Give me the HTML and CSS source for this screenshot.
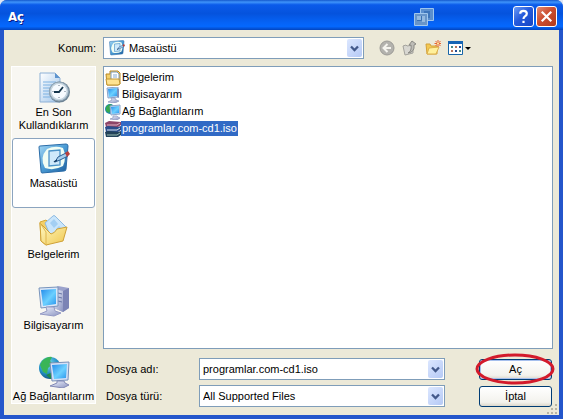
FILE: index.html
```html
<!DOCTYPE html>
<html lang="tr">
<head>
<meta charset="utf-8">
<title>Aç</title>
<link rel="stylesheet" href="styles.css">
</head>
<body>
<svg class="defs" aria-hidden="true">
  <defs>
    <linearGradient id="screen" x1="0" y1="0" x2="1" y2="1"><stop offset="0" stop-color="#248bea"/><stop offset=".55" stop-color="#6cd0ff"/><stop offset="1" stop-color="#2a95ed"/></linearGradient>
    <linearGradient id="metal" x1="0" y1="0" x2="1" y2="1"><stop offset="0" stop-color="#f1f4ff"/><stop offset="1" stop-color="#8a93c0"/></linearGradient>
    <linearGradient id="folder" x1="0" y1="0" x2="1" y2="1"><stop offset="0" stop-color="#fff9c4"/><stop offset="1" stop-color="#f0c850"/></linearGradient>
    <linearGradient id="paper" x1="0" y1="0" x2="1" y2="1"><stop offset="0" stop-color="#fff"/><stop offset="1" stop-color="#9fc4ea"/></linearGradient>
    <linearGradient id="frame" x1="0" y1="0" x2="1" y2="1"><stop offset="0" stop-color="#a5d8f5"/><stop offset=".5" stop-color="#4a9bd4"/><stop offset="1" stop-color="#1b5c9c"/></linearGradient>
    <radialGradient id="globe" cx=".4" cy=".3" r=".75"><stop offset="0" stop-color="#86e0f0"/><stop offset=".6" stop-color="#228fc5"/><stop offset="1" stop-color="#125080"/></radialGradient>
    <symbol id="recent" viewBox="0 0 32 32">
      <path d="M2 1h15l5 5v24H2z" fill="url(#paper)" stroke="#8db0d6"/><path d="M17 1v5h5z" fill="#5e94ce"/>
      <path d="M5 10h13M5 13h10M5 16h7M5 19h6M5 22h6M5 25h7" stroke="#7db1e2"/>
      <circle cx="21.500" cy="20" r="10.500" fill="#6e8394"/><circle cx="21" cy="19.500" r="9.500" fill="#c4d3de" stroke="#8ca3b4"/><circle cx="21" cy="19.500" r="7.500" fill="#f7fbff"/>
      <path d="M21 13v1M21 25v1M14.500 19.500h1M26.500 19.500h1" stroke="#678"/><path d="M25 15l-4 5h-5" fill="none" stroke="#16364c" stroke-width="1.800"/>
    </symbol>
    <symbol id="desktop" viewBox="0 0 32 32">
      <path d="M1 4q0-1 1-1l26-2q2 0 2 2l-2 23q0 2-2 2L4 30q-1 0-1-2z" fill="url(#frame)" stroke="#2a6ca8"/>
      <path d="M9 6q8-4 16-1 4 9 0 18-9 5-18 2-6-10 2-19z" fill="#f0fdf4"/>
      <path d="M11 8l11-1v15l-11 1z" fill="#cfe9fb" stroke="#4b93c8" stroke-width="1.300"/>
      <path d="M17 19l3-5 8-4 2 3-8 4z" fill="#a5cdec" stroke="#2d5f94"/><path d="M16 19l3-2" stroke="#163f66" stroke-width="1.500"/>
      <path d="M27 10l3-2 2 3-3 3z" fill="#b8403d"/>
    </symbol>
    <symbol id="documents" viewBox="0 0 32 32">
      <path d="M2 8l6-2 3 3 4-1v20l-7 3-5-4z" fill="#f3d069" stroke="#d4a838"/>
      <path d="M7 9l8-7q1-1 2 0l11 11-8 12-8-4z" fill="#c9e5fb" stroke="#8ebbe2"/><path d="M12 9l4-4 4 5-4 4zM18 15l3-3 3 3-3 4z" fill="#a3cff3"/>
      <path d="M2 9l11 11q4-1 6-5l10-2-4 14-17 4-5-4z" fill="url(#folder)" stroke="#cfa137"/><path d="M2 9l6 9v13" fill="none" stroke="#dfb64f"/>
    </symbol>
    <symbol id="computer" viewBox="0 0 32 32">
      <path d="M16 4l4-3 11 2v20l-6 4-9-4z" fill="#9ca3cc"/><path d="M16 4l9 2v21l-9-4z" fill="url(#metal)"/><path d="M25 6l6-3v20l-6 4z" fill="#7b83b5"/><path d="M20 8l4 1M20 12l4 1M20 16l4 1" stroke="#6876a7"/>
      <path d="M1 3l19-1v19L3 23z" fill="#dce7f8" stroke="#7894bc"/><path d="M3 5l15-1v15L5 21z" fill="url(#screen)"/>
      <path d="M8 22h8l1 4 6 2-7 3-14-2 7-3z" fill="url(#metal)" stroke="#9399c4"/>
    </symbol>
    <symbol id="network" viewBox="0 0 32 32">
      <circle cx="12" cy="12" r="11" fill="url(#globe)"/><path d="M4 5q6-5 10-4l-2 4 3 3-5 4-1 6-4-2-3-7z" fill="#39b557"/><path d="M8 19l7-3 2 6-4 1z" fill="#1d8b49"/>
      <path d="M12 7l19-1-1 18-16 1z" fill="#d5e0f6" stroke="#7890b8"/><path d="M14 9l15-1-1 14-12 1z" fill="url(#screen)"/>
      <path d="M19 25h7l1 2 4 2-6 3-13-2 7-3z" fill="url(#metal)" stroke="#8289b5"/>
    </symbol>
    <symbol id="monitor" viewBox="0 0 16 16">
      <path d="M2 1l11-1v10L3 11z" fill="#cbdcf2" stroke="#8ba5ca"/><path d="M3 2l9-1v8L4 10z" fill="url(#screen)"/><path d="M12 1l2 1v9l-2-1z" fill="#7d91bd"/><path d="M6 11h4l1 2 3 1-4 2-7-1 4-2z" fill="url(#metal)" stroke="#8a95bb" stroke-width=".7"/>
    </symbol>
    <symbol id="network-small" viewBox="0 0 16 16">
      <circle cx="5" cy="5" r="5" fill="#1f86ab"/><path d="M1 3q3-4 6-2L6 5 4 9 1 7z" fill="#35a850"/>
      <path d="M5 2l10-1v9L6 11z" fill="#cbdcf2" stroke="#8ba5ca"/><path d="M6 3l8-1v7L7 10z" fill="url(#screen)"/><path d="M8 12h4l1 1 2 1-3 2-7-1 3-1z" fill="url(#metal)" stroke="#8a95bb" stroke-width=".7"/>
    </symbol>
    <symbol id="mydocs" viewBox="0 0 16 16">
      <path d="M1 4h4V1h8l2 2v11l-2 1H2z" fill="#f3d06b" stroke="#ba8823"/><path d="M6 2h6l2 2v7H6z" fill="#fff" stroke="#7f9bb9"/><path d="M8 5h4M8 7h4" stroke="#83a9d1"/><path d="M1 9h13l1 5-2 1H2z" fill="#ffe391" stroke="#c19634"/>
    </symbol>
    <symbol id="archive" viewBox="0 0 16 16">
      <path d="M0 2l4-2 12 1v3l-3 2H1z" fill="#8e4568"/><path d="M2 4h10l3-2" fill="none" stroke="#e0b4c5"/><path d="M0 6l3-1 10 1 3-1v4l-3 2H1z" fill="#2b4d8b"/><path d="M2 9h10l3-2" fill="none" stroke="#d6e3ee"/><path d="M0 11l3-1 10 1 3-1v4l-3 2H1z" fill="#23435a"/><path d="M2 14h10l3-2" fill="none" stroke="#9abdb0"/>
    </symbol>
    <symbol id="chevron" viewBox="0 0 9 7"><path d="M1 1.500l3.500 3.500L8 1.500" fill="none" stroke="#43598a" stroke-width="2.300"/></symbol>
  </defs>
</svg>

<main class="window">
  <header class="titlebar">
    <h1>Aç</h1>
    <svg class="overlap" viewBox="0 0 20 20" aria-hidden="true"><path d="M6.500 1.500h13v12h-13z" fill="#5b8fce" stroke="#9cc5ef"/><path d="M10 4h6v7h-6z" fill="#3c75bb"/><path d="M.5 6.500h13v12H.5z" fill="#6795c9" stroke="#a0c7ed"/><path d="M3 9h4v4H3zM8 9h3v6H8z" fill="#93b9e0"/><path d="M7.500 9v4.500H3" fill="none" stroke="#3970b2"/></svg>
    <button class="caption" aria-label="Yardım"><svg viewBox="0 0 20 20"><path d="M6.500 7Q6.500 4 10 4t3.500 3q0 1.500-2 2.800-1.500 1-1.500 2.700M10 14.500v2.300" fill="none" stroke="#fff" stroke-width="2.300"/></svg></button>
    <button class="caption close" aria-label="Kapat"><svg viewBox="0 0 20 20"><path d="M5 5l10 10M15 5L5 15" stroke="#fff" stroke-width="2.300"/></svg></button>
  </header>

  <div class="content">
    <div class="toolbar">
      <label for="place">Konum:</label>
      <div class="combo location">
        <svg class="small" aria-hidden="true"><use href="#desktop"/></svg>
        <select id="place"><option>Masaüstü</option></select>
        <span class="arrow"><svg><use href="#chevron"/></svg></span>
      </div>
      <div class="tools">
        <button class="tool" aria-label="Geri"><svg viewBox="0 0 16 16"><circle cx="8" cy="8" r="7" fill="#b3b2ad" stroke="#9c9b96"/><path d="M8.500 4L4.500 8l4 4M5 8h7" fill="none" stroke="#f5f4ee" stroke-width="2"/></svg></button>
        <button class="tool" aria-label="Yukarı"><svg viewBox="0 0 16 16"><path d="M1 6l3-1 1 1 6-1v8l-8 2z" fill="#d8d7d1" stroke="#a3a29c"/><path d="M6 13q4-2 3-8H7l3-4 4 3-2 1q1 7-6 8z" fill="#bebdb7" stroke="#8b8a85"/></svg></button>
        <button class="tool" aria-label="Yeni klasör"><svg viewBox="0 0 16 16"><path d="M1 4h4l1 2h6v8H2z" fill="#f3c851" stroke="#d3a139"/><path d="M2 14l2-6 10-1-3 7z" fill="#fff09b" stroke="#ddb04b"/><path d="M13 0v7M9.500 3.500h7M10.500 1l5 5M15.500 1l-5 5" stroke="#e8602c"/><circle cx="13" cy="3.500" r="1" fill="#fff4a3"/></svg></button>
        <button class="tool views" aria-label="Görünümler"><svg viewBox="0 0 24 16"><path d="M.5 1.500h14v13H.5z" fill="#fff" stroke="#1765a8"/><path d="M0 1h15v3H0z" fill="#1765b4"/><path d="M3 6h2v2H3zM11 10h2v2h-2z" fill="#478b83"/><path d="M7 6h2v2H7zM3 10h2v2H3z" fill="#b7745b"/><path d="M11 6h2v2h-2zM7 10h2v2H7z" fill="#264c94"/><path d="M17 7h6l-3 3z" fill="#000"/></svg></button>
      </div>
    </div>

    <div class="browser">
      <nav class="places" aria-label="Yerler">
        <button class="place"><svg><use href="#recent"/></svg><span>En Son<br>Kullandıklarım</span></button>
        <button class="place current"><svg><use href="#desktop"/></svg><span>Masaüstü</span></button>
        <button class="place"><svg><use href="#documents"/></svg><span>Belgelerim</span></button>
        <button class="place"><svg><use href="#computer"/></svg><span>Bilgisayarım</span></button>
        <button class="place"><svg><use href="#network"/></svg><span>Ağ Bağlantılarım</span></button>
      </nav>
      <div class="pane">
        <ul class="files">
          <li><svg><use href="#mydocs"/></svg><span>Belgelerim</span></li>
          <li><svg><use href="#monitor"/></svg><span>Bilgisayarım</span></li>
          <li><svg><use href="#network-small"/></svg><span>Ağ Bağlantılarım</span></li>
          <li class="selected"><svg><use href="#archive"/></svg><span>programlar.com-cd1.iso</span></li>
        </ul>
        <form class="fields">
          <label for="name">Dosya adı:</label>
          <div class="combo"><input id="name" type="text" value="programlar.com-cd1.iso"><button type="button" class="arrow" aria-label="Önceki adlar"><svg><use href="#chevron"/></svg></button></div>
          <div class="action"><button type="button" class="push default">Aç</button><svg class="ring" viewBox="0 0 80 32" aria-hidden="true"><ellipse cx="40" cy="16" rx="38" ry="14" fill="none" stroke="#d31a2b" stroke-width="3"/></svg></div>
          <label for="type">Dosya türü:</label>
          <div class="combo"><select id="type"><option>All Supported Files</option></select><span class="arrow"><svg><use href="#chevron"/></svg></span></div>
          <div class="action"><button type="button" class="push">İptal</button></div>
        </form>
      </div>
    </div>
  </div>
  <svg class="grip" viewBox="0 0 12 12" aria-hidden="true"><path d="M9 1h2v2H9zM5 5h2v2H5zM9 5h2v2H9zM1 9h2v2H1zM5 9h2v2H5zM9 9h2v2H9z" fill="#b8b4a3"/></svg>
</main>
</body>
</html>
```
FILE: styles.css
```css
* { box-sizing: border-box; }

body {
  margin: 0;
  background: #dfe6f5;
  color: #000;
  font: 11px/13px "Liberation Sans", Arial, sans-serif;
}

button, input, select { font: inherit; color: inherit; }
svg { display: block; flex: none; }
.defs { position: absolute; width: 0; height: 0; }

.window {
  position: relative;
  display: flex;
  flex-direction: column;
  min-height: 100vh;
  padding: 0 4px 4px;
  border-radius: 7px 7px 0 0;
  background: #2456cb;
}

.titlebar {
  display: flex;
  align-items: center;
  gap: 2px;
  height: 30px;
  margin: 0 -4px;
  padding: 3px 6px 0 8px;
  border-radius: 7px 7px 0 0;
  background: linear-gradient(#1458cd 0, #3f94fa 7%, #0b5bea 16%, #0553dd 45%, #0563f6 75%, #0468fe 88%, #0344bd 100%);
}

h1 {
  flex: 1;
  margin: 0;
  color: #fff;
  font: bold 13px/16px "DejaVu Sans Condensed", "DejaVu Sans", sans-serif;
  text-shadow: 1px 1px #0a1883;
}

.overlap { width: 20px; height: 20px; margin-right: 77px; }

.caption {
  width: 21px;
  height: 21px;
  padding: 0;
  border: 1px solid #fff;
  border-radius: 3px;
  background: linear-gradient(135deg, #6b9bf5, #265bdc 45%, #1545c4);
}

.close { background: linear-gradient(135deg, #e08a72, #cc4e30 45%, #b03a1c); }
.caption svg { width: 19px; height: 19px; }

.content {
  flex: 1;
  display: flex;
  flex-direction: column;
  gap: 7px;
  padding: 7px 6px 8px 7px;
  background: #ece9d8;
}

.toolbar { display: flex; align-items: center; height: 22px; }
.toolbar label { width: 85px; margin-right: 7px; text-align: right; }
.location { flex: 0 1 261px; }

.combo {
  position: relative;
  display: flex;
  align-items: center;
  min-width: 0;
  height: 22px;
  border: 1px solid #7f9db9;
  background: #fff;
}

.combo .small { width: 16px; height: 16px; margin-left: 5px; }

.combo input, .combo select {
  flex: 1;
  min-width: 0;
  height: 20px;
  padding: 0 20px 0 3px;
  border: 0;
  outline: 0;
  background: transparent;
  appearance: none;
}

.location select { padding-left: 4px; }

.arrow {
  position: absolute;
  top: 1px;
  right: 1px;
  bottom: 1px;
  display: grid;
  place-items: center;
  width: 15px;
  padding: 0;
  border: 0;
  border-radius: 2px;
  background: linear-gradient(135deg, #dce7ff, #b5c9f5);
  pointer-events: none;
}

button.arrow { pointer-events: auto; }
.arrow svg { width: 9px; height: 7px; }

.tools { display: flex; gap: 7px; margin-left: 15px; }
.tool { padding: 0; border: 0; background: none; }
.tool svg { width: 16px; height: 16px; }
.views svg { width: 24px; }

.browser { flex: 1; display: flex; gap: 7px; }

.places {
  display: flex;
  flex-direction: column;
  gap: 1px;
  width: 85px;
  margin-bottom: 3px;
  border: 1px solid #fff;
  background: #f8f7f2;
  white-space: nowrap;
}

.place {
  display: flex;
  flex-direction: column;
  align-items: center;
  gap: 2px;
  height: 70px;
  padding: 4px 0 0;
  border: 1px solid transparent;
  border-radius: 3px;
  background: none;
}

.place:last-child { height: 51px; }
.place svg { width: 32px; height: 32px; }
.current { border-color: #8ba4bf; background: #fff; }

.pane { flex: 1; display: flex; flex-direction: column; min-width: 0; }

.files {
  flex: 1;
  margin: 0 0 9px;
  padding: 2px 1px;
  border: 1px solid #7f9db9;
  background: #fff;
  list-style: none;
}

.files li { display: flex; align-items: center; height: 17px; }
.files svg { width: 16px; height: 16px; }
.files span { padding: 1px; }
.selected span { background: #316ac5; color: #fff; }

.fields {
  display: grid;
  grid-template-columns: 93px minmax(0, 1fr) 73px;
  align-items: center;
  row-gap: 5px;
  padding: 0 1px 0 3px;
}

.fields .combo { margin-right: 34px; }
.action { position: relative; }

.push {
  display: block;
  width: 100%;
  height: 21px;
  padding: 0;
  border: 1px solid #003c74;
  border-radius: 3px;
  background: linear-gradient(#fff, #f3f2ed 80%, #dcd7cb);
}

.default { box-shadow: inset 0 0 0 1px #a6bfed; }

.ring {
  position: absolute;
  top: -6px;
  left: -4px;
  width: 80px;
  height: 32px;
  pointer-events: none;
}

.grip { position: absolute; right: 5px; bottom: 4px; width: 12px; height: 12px; }
```
